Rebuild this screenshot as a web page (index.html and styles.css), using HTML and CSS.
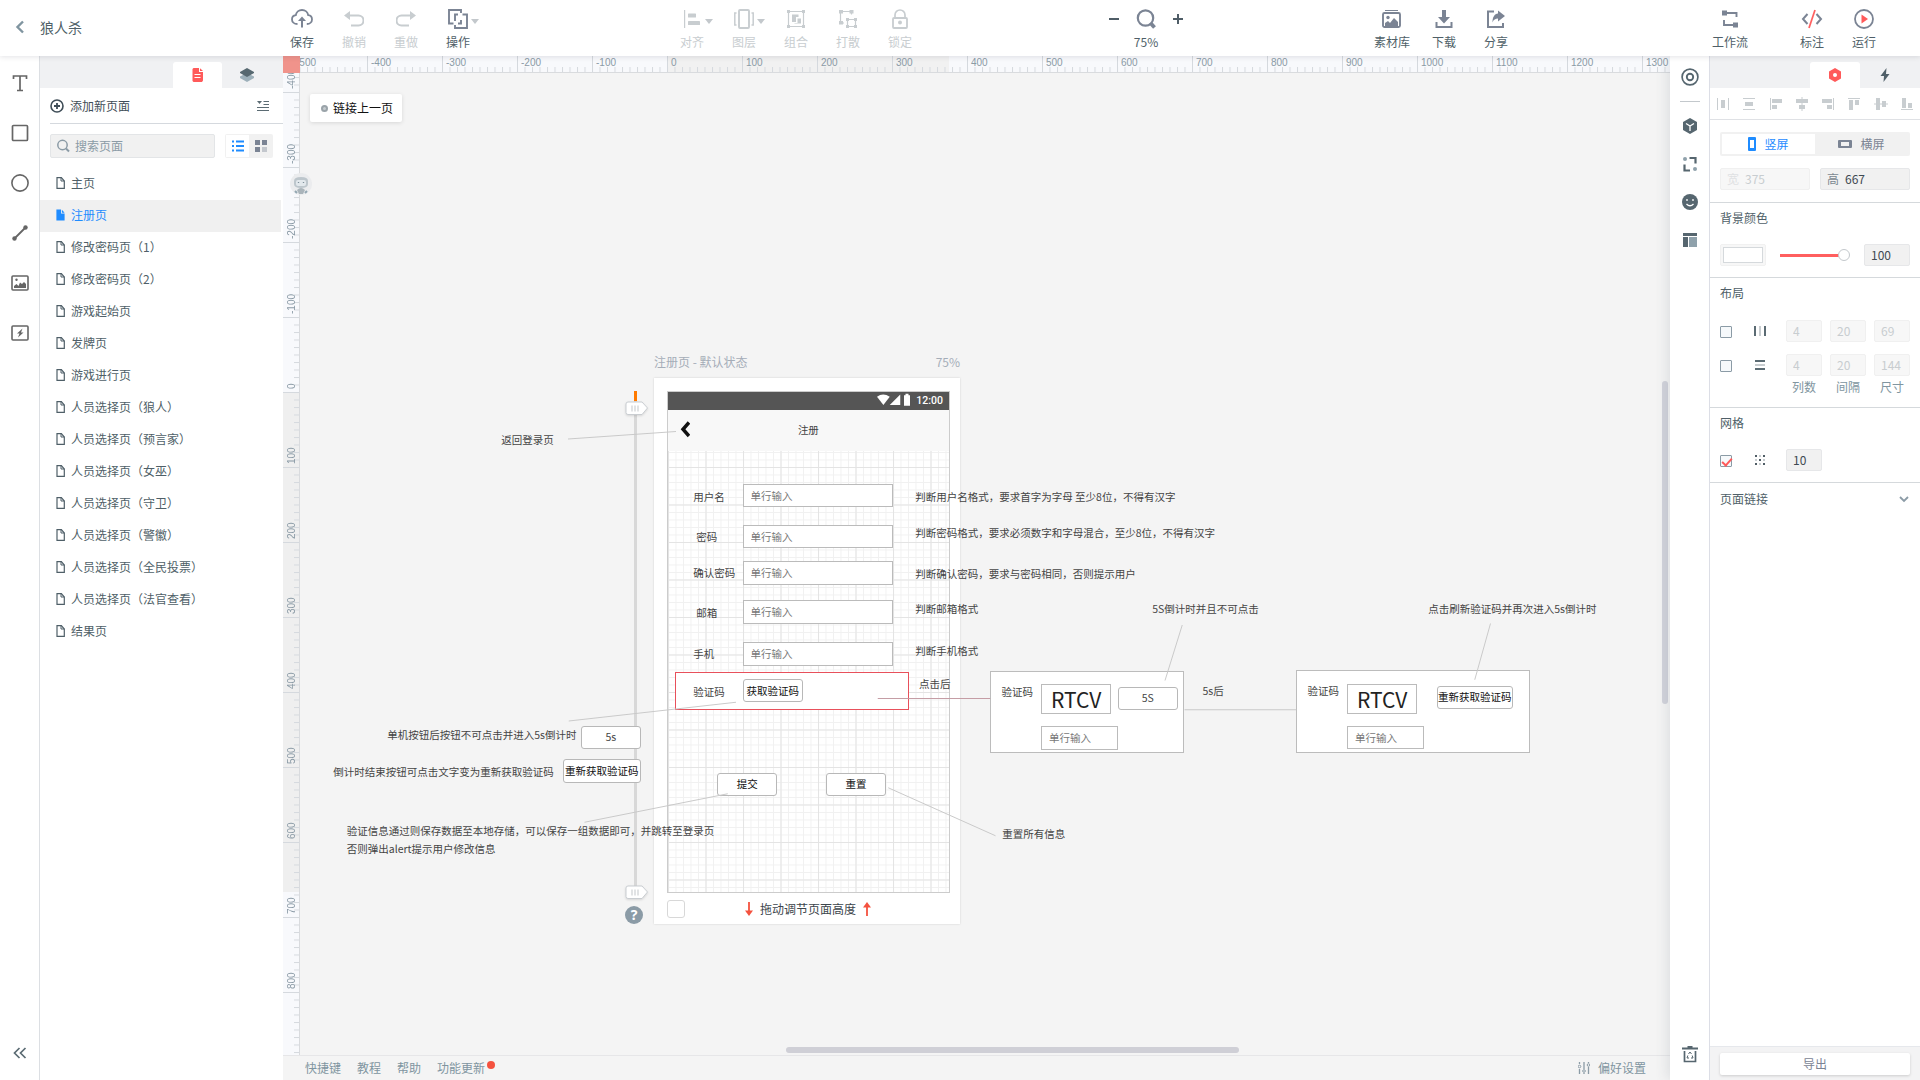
FILE: index.html
```html
<!DOCTYPE html>
<html lang="zh-CN">
<head>
<meta charset="utf-8">
<title>狼人杀</title>
<link rel="stylesheet" href="styles.css">
</head>
<body>
<svg class="sprite" aria-hidden="true">
  <symbol id="doc" viewBox="0 0 9 12"><path d="M1 .7h4.4L8.3 4v7.3H1z" fill="none" stroke="currentColor" stroke-width="1.2"/><path d="M5 .7V4h3.3" fill="none" stroke="currentColor"/></symbol>
  <symbol id="doc-full" viewBox="0 0 9 12"><path d="M.4.5H5V4.6h3.6v7H.4z" fill="currentColor"/><path d="M5.9.8v2.9h2.7z" fill="currentColor"/></symbol>
  <symbol id="caret" viewBox="0 0 8 5"><path d="M0 0h8L4 5z" fill="currentColor"/></symbol>
</svg>

<div class="app">
  <header class="topbar">
    <div class="project">
      <a class="back" href="#" aria-label="返回"><svg width="10" height="14" viewBox="0 0 10 14"><path d="M8 1.5 2.5 7 8 12.5" fill="none" stroke="#8095a0" stroke-width="2.4"/></svg></a>
      <span class="project-name">狼人杀</span>
    </div>
    <div class="tools">
      <div class="group">
        <button class="tool"><svg width="22" height="20" viewBox="0 0 22 20"><path d="M6.5 15C3 15 1 13 1 10.400 1 8 2.800 6.500 4.800 6.200 5.200 3.200 7.800 1 11 1s5.800 2.200 6.200 5.200C19.400 6.500 21 8 21 10.400c0 2.600-2 4.600-5.200 4.600" fill="none" stroke="currentColor" stroke-width="1.8"/><path d="M11 18.500V10" stroke="currentColor" stroke-width="2"/><path d="M11 7.500l4 4.500H7z" fill="currentColor"/></svg><span>保存</span></button>
        <button class="tool" disabled><svg width="20" height="20" viewBox="0 0 20 20"><path d="M0 6.500 6 2v9z" fill="currentColor"/><path d="M5 6.500h9.500a4.500 4.500 0 0 1 0 10H7" fill="none" stroke="currentColor" stroke-width="2"/></svg><span>撤销</span></button>
        <button class="tool" disabled><svg width="20" height="20" viewBox="0 0 20 20"><path d="M20 6.500 14 2v9z" fill="currentColor"/><path d="M15 6.500H5.500a4.500 4.500 0 0 0 0 10H13" fill="none" stroke="currentColor" stroke-width="2"/></svg><span>重做</span></button>
        <button class="tool has-menu"><svg width="20" height="20" viewBox="0 0 20 20"><path d="M5.500 14.500H1V1h12v3M10 14.500h3V11M14.500 5.500H19V19H7v-3M10 5.500H7V12" fill="none" stroke="currentColor" stroke-width="1.900"/></svg><svg class="caret" width="8" height="5"><use href="#caret"/></svg><span>操作</span></button>
      </div>
      <div class="group">
        <button class="tool has-menu" disabled><svg width="16" height="20" viewBox="0 0 16 20"><path d="M.6 1v18" stroke="currentColor" stroke-width="1.200"/><rect x="4" y="4.500" width="8" height="4" rx=".6" fill="currentColor"/><rect x="4" y="12" width="12" height="4" rx=".6" fill="currentColor"/></svg><svg class="caret" width="8" height="5"><use href="#caret"/></svg><span>对齐</span></button>
        <button class="tool has-menu" disabled><svg width="20" height="20" viewBox="0 0 20 20"><rect x="5" y="1" width="10" height="18" rx="1" fill="none" stroke="currentColor" stroke-width="1.900"/><path d="M2.500 4H.8v12h1.700M17.500 4h1.700v12h-1.700" fill="none" stroke="currentColor" stroke-width="1.500"/></svg><svg class="caret" width="8" height="5"><use href="#caret"/></svg><span>图层</span></button>
        <button class="tool" disabled><svg width="18" height="20" viewBox="0 0 18 20"><path d="M1.500 2.500h15v15h-15z" fill="none" stroke="currentColor" stroke-width="1.200"/><path d="M0 1h3v3H0zM15 1h3v3h-3zM0 16h3v3H0zM15 16h3v3h-3z" fill="currentColor"/><path d="M5 5.500h6.500V8H9v5H5zM10.500 9.500H14v5H7.500V14h3z" fill="currentColor"/></svg><span>组合</span></button>
        <button class="tool" disabled><svg width="20" height="20" viewBox="0 0 20 20"><path d="M2.500 2.500h11v3M2.500 2.500V14H6" fill="none" stroke="currentColor" stroke-width="1.200"/><path d="M9.500 10.500h8v7h-8z" fill="none" stroke="currentColor" stroke-width="1.200"/><path d="M1 1h4v3.500H1zM11.500 1h4v3.500h-4zM1 12h4v3.500H1zM8 9h3v3H8zM16 9h3v3h-3zM8 16h3v3H8zM16 16h3v3h-3z" fill="currentColor"/></svg><span>打散</span></button>
        <button class="tool" disabled><svg width="18" height="20" viewBox="0 0 18 20"><rect x="2" y="9" width="14" height="10" rx="1" fill="none" stroke="currentColor" stroke-width="1.800"/><path d="M4 8V6a5 5 0 0 1 10 0v2" fill="none" stroke="currentColor" stroke-width="1.700"/><circle cx="9" cy="13.500" r="2" fill="currentColor"/></svg><span>锁定</span></button>
      </div>
      <div class="zoom-group">
        <div class="zoom-row">
          <button class="icon-btn" aria-label="缩小"><svg width="10" height="10"><path d="M0 5h10" stroke="#4f5d67" stroke-width="2"/></svg></button>
          <button class="icon-btn" aria-label="缩放"><svg width="22" height="20" viewBox="0 0 22 20"><circle cx="10.500" cy="9" r="7.700" fill="none" stroke="#7b8494" stroke-width="2.200"/><path d="m15.500 14 4 4.500" stroke="#7b8494" stroke-width="3.800"/></svg></button>
          <button class="icon-btn" aria-label="放大"><svg width="10" height="10"><path d="M0 5h10M5 0v10" stroke="#4f5d67" stroke-width="2"/></svg></button>
        </div>
        <span>75%</span>
      </div>
      <div class="group">
        <button class="tool"><svg width="20" height="20" viewBox="0 0 20 20"><path d="M3 1.500h13" stroke="currentColor"/><rect x="1" y="4" width="17" height="14" rx="1.500" fill="none" stroke="currentColor" stroke-width="1.900"/><circle cx="6" cy="8.500" r="1.700" fill="currentColor"/><path d="M3 17v-3l3-2 2 2 4-5 4 4v4z" fill="currentColor"/></svg><span>素材库</span></button>
        <button class="tool"><svg width="18" height="20" viewBox="0 0 18 20"><path d="M1.500 13v5h15v-5" fill="none" stroke="currentColor" stroke-width="2"/><path d="M7 1h4v7h4l-6 6.500L3 8h4z" fill="currentColor"/></svg><span>下载</span></button>
        <button class="tool"><svg width="20" height="20" viewBox="0 0 20 20"><path d="M8 2.500H2V18h15v-4" fill="none" stroke="currentColor" stroke-width="2"/><path d="M12 1.500 19 7l-7 5.500V9.500c-2.500 0-4.500 1-5.500 4C6.500 8 8.500 5 12 4.500z" fill="currentColor"/></svg><span>分享</span></button>
      </div>
      <div class="group">
        <button class="tool flow"><svg width="18" height="20" viewBox="0 0 18 20"><path d="M4 4h11.500v4M14 16H3v-5" fill="none" stroke="currentColor" stroke-width="1.900"/><path d="M1 1.500h5v5H1zM12 13.500h5v5h-5z" fill="currentColor"/></svg><span>工作流</span></button>
        <button class="tool"><svg width="22" height="20" viewBox="0 0 22 20"><path d="M6.500 5 2 10l4.500 5M15.500 5l4.500 5-4.500 5" fill="none" stroke="#7b8494" stroke-width="2"/><path d="M14 1 8 19" stroke="#ff5f5f" stroke-width="1.700"/></svg><span>标注</span></button>
        <button class="tool"><svg width="22" height="20" viewBox="0 0 22 20"><circle cx="11" cy="10" r="9" fill="none" stroke="#7b8494" stroke-width="1.800"/><path d="M8.500 5.500V14.500L15 10z" fill="#ff5a5a"/></svg><span>运行</span></button>
      </div>
    </div>
  </header>

  <nav class="shapes" aria-label="绘图工具">
    <button class="icon-btn" aria-label="文本"><svg width="18" height="20" viewBox="0 0 18 20"><path d="M2.500 6V3h13v3M9 3v14.500M6 17.500h6" fill="none" stroke="currentColor" stroke-width="1.700"/></svg></button>
    <button class="icon-btn" aria-label="矩形"><svg width="18" height="20" viewBox="0 0 18 20"><rect x="1.500" y="2.500" width="15" height="15" rx="1" fill="none" stroke="currentColor" stroke-width="1.700"/></svg></button>
    <button class="icon-btn" aria-label="圆形"><svg width="18" height="20" viewBox="0 0 18 20"><circle cx="9" cy="10" r="8.100" fill="none" stroke="currentColor" stroke-width="1.600"/></svg></button>
    <button class="icon-btn" aria-label="直线"><svg width="18" height="20" viewBox="0 0 18 20"><path d="M3.500 15.500 14.500 4.500" stroke="currentColor" stroke-width="1.800"/><circle cx="3.500" cy="15.500" r="2.200" fill="currentColor"/><circle cx="14.500" cy="4.500" r="2.200" fill="currentColor"/></svg></button>
    <button class="icon-btn" aria-label="图片"><svg width="18" height="20" viewBox="0 0 18 20"><rect x="1" y="3" width="16" height="14" rx="1" fill="none" stroke="currentColor" stroke-width="1.600"/><circle cx="5.500" cy="6.800" r="1.200" fill="currentColor"/><path d="M3 15v-2l2.500-2 2 2L9 9.500l2 1.500 2-2 2 2v4z" fill="currentColor"/></svg></button>
    <button class="icon-btn" aria-label="快捷组件"><svg width="18" height="20" viewBox="0 0 18 20"><rect x="1" y="3" width="16" height="14" rx="1" fill="none" stroke="currentColor" stroke-width="1.600"/><path d="M11.500 5.500 6 10.500h2.500L7 14.500l5.500-5H10z" fill="currentColor"/></svg></button>
    <button class="icon-btn collapse" aria-label="收起"><svg width="14" height="12" viewBox="0 0 14 12"><path d="M6.500 1 1.500 6l5 5M12.500 1l-5 5 5 5" fill="none" stroke="currentColor" stroke-width="1.700"/></svg></button>
  </nav>

  <aside class="pages">
    <div class="tabs">
      <button class="tab active" aria-label="页面"><svg width="12" height="14" viewBox="0 0 12 14"><path d="M1.500 0H7v4h4v8.500L10 14H1.500L.5 13V1z" fill="#ff5a5a"/><path d="M8 .3V3h3z" fill="#ff5a5a"/><path d="M2.500 6.500h6M2.500 9.500h6" stroke="#fff" stroke-width="1.200"/></svg></button>
      <button class="tab" aria-label="图层"><svg width="16" height="14" viewBox="0 0 16 14"><path d="M1 8.500 8 5l7 3.500v1.500L8 14 1 10z" fill="#9db0ba"/><path d="M1 4 8 0l7 4v1L8 9 1 5z" fill="#566870"/></svg></button>
    </div>
    <div class="add-row">
      <button class="add"><svg width="14" height="14" viewBox="0 0 14 14"><circle cx="7" cy="7" r="6" fill="none" stroke="currentColor" stroke-width="1.600"/><path d="M4 7h6M7 4v6" stroke="currentColor" stroke-width="1.800"/></svg>添加新页面</button>
      <button class="icon-btn" aria-label="折叠"><svg width="12" height="12" viewBox="0 0 12 12"><path d="M0 1h5L2.500 4z" fill="#5b6b73"/><path d="M6.500 1.500H12M6.500 4.500H12M0 7.500h12M0 10.500h12" stroke="#5b6b73" stroke-width="1.200"/></svg></button>
    </div>
    <div class="search-row">
      <label class="search"><svg width="14" height="14" viewBox="0 0 14 14"><circle cx="6.500" cy="6" r="4.700" fill="none" stroke="#8b9ba6" stroke-width="1.500"/><path d="m10 9.500 3 3" stroke="#8b9ba6" stroke-width="2"/></svg><input type="text" placeholder="搜索页面" aria-label="搜索页面"></label>
      <div class="view-toggle">
        <button class="on" aria-label="列表"><svg width="12" height="12" viewBox="0 0 12 12"><path d="M0 1.500h2M0 6h2M0 10.500h2M4 1.500h8M4 6h8M4 10.500h8" stroke="#1f8cff" stroke-width="1.800"/></svg></button>
        <button aria-label="网格"><svg width="12" height="12" viewBox="0 0 12 12"><path d="M0 0h5v5H0zM7 0h5v5H7zM0 7h5v5H0z" fill="#7b8494"/><path d="M7 7h5v5H7z" fill="#c3c7cd"/></svg></button>
      </div>
    </div>
    <ul class="page-list">
      <li><a href="#"><svg width="9" height="12"><use href="#doc"/></svg>主页</a></li>
      <li><a href="#" class="current"><svg width="9" height="12"><use href="#doc-full"/></svg>注册页</a></li>
      <li><a href="#"><svg width="9" height="12"><use href="#doc"/></svg>修改密码页（1）</a></li>
      <li><a href="#"><svg width="9" height="12"><use href="#doc"/></svg>修改密码页（2）</a></li>
      <li><a href="#"><svg width="9" height="12"><use href="#doc"/></svg>游戏起始页</a></li>
      <li><a href="#"><svg width="9" height="12"><use href="#doc"/></svg>发牌页</a></li>
      <li><a href="#"><svg width="9" height="12"><use href="#doc"/></svg>游戏进行页</a></li>
      <li><a href="#"><svg width="9" height="12"><use href="#doc"/></svg>人员选择页（狼人）</a></li>
      <li><a href="#"><svg width="9" height="12"><use href="#doc"/></svg>人员选择页（预言家）</a></li>
      <li><a href="#"><svg width="9" height="12"><use href="#doc"/></svg>人员选择页（女巫）</a></li>
      <li><a href="#"><svg width="9" height="12"><use href="#doc"/></svg>人员选择页（守卫）</a></li>
      <li><a href="#"><svg width="9" height="12"><use href="#doc"/></svg>人员选择页（警徽）</a></li>
      <li><a href="#"><svg width="9" height="12"><use href="#doc"/></svg>人员选择页（全民投票）</a></li>
      <li><a href="#"><svg width="9" height="12"><use href="#doc"/></svg>人员选择页（法官查看）</a></li>
      <li><a href="#"><svg width="9" height="12"><use href="#doc"/></svg>结果页</a></li>
    </ul>
  </aside>

  <main class="workspace">
    <div class="ruler-corner"></div>
    <div class="ruler ruler-x">
      <svg class="ticks" width="100%" height="16"><defs><pattern id="tx" x="367" width="7.500" height="16" patternUnits="userSpaceOnUse"><path d="M.5 11v5" stroke="#d5d9de"/></pattern></defs><rect x="367" width="282" height="16" fill="#f1f1f1"/><rect width="100%" height="16" fill="url(#tx)"/></svg>
      <div class="marks"><span>-500</span><span>-400</span><span>-300</span><span>-200</span><span>-100</span><span>0</span><span>100</span><span>200</span><span>300</span><span>400</span><span>500</span><span>600</span><span>700</span><span>800</span><span>900</span><span>1000</span><span>1100</span><span>1200</span><span>1300</span></div>
    </div>
    <div class="ruler ruler-y">
      <svg class="ticks" width="16" height="100%"><defs><pattern id="ty" y="319" width="16" height="7.500" patternUnits="userSpaceOnUse"><path d="M11 .5h5" stroke="#d5d9de"/></pattern></defs><rect y="319" width="16" height="500" fill="#efefef"/><rect width="16" height="100%" fill="url(#ty)"/></svg>
      <div class="marks"><span>-400</span><span>-300</span><span>-200</span><span>-100</span><span>0</span><span>100</span><span>200</span><span>300</span><span>400</span><span>500</span><span>600</span><span>700</span><span>800</span></div>
    </div>

    <div class="canvas">
      <button class="link-prev"><i></i>链接上一页</button>

      <div class="board-head"><span>注册页 - 默认状态</span><span>75%</span></div>
      <div class="board">
        <div class="board-foot">
          <input type="checkbox" class="foot-check" aria-label="固定高度">
          <div class="resize">
            <svg width="8" height="14" viewBox="0 0 8 14"><path d="M4 0v10" stroke="#f4523f" stroke-width="1.800"/><path d="M0 8.500h8L4 14z" fill="#f4523f"/></svg>
            <span>拖动调节页面高度</span>
            <svg width="8" height="14" viewBox="0 0 8 14"><path d="M4 14V4" stroke="#f4523f" stroke-width="1.800"/><path d="M0 5.500h8L4 0z" fill="#f4523f"/></svg>
          </div>
        </div>
      </div>
      <div class="track"></div>
      <svg class="handle handle-top" width="24" height="16" viewBox="0 0 24 16"><path d="M3 1h14l5.500 6L17 13.500H3q-2 0-2-2V3q0-2 2-2z" fill="#fff" stroke="#c9cdd1"/><path d="M7 4.500v6M10 4.500v6M13 4.500v6" stroke="#c3c7ca"/></svg>
      <svg class="handle handle-bottom" width="24" height="16" viewBox="0 0 24 16"><path d="M3 1h14l5.500 6L17 13.500H3q-2 0-2-2V3q0-2 2-2z" fill="#fff" stroke="#c9cdd1"/><path d="M7 4.500v6M10 4.500v6M13 4.500v6" stroke="#c3c7ca"/></svg>
      <button class="help" aria-label="帮助">?</button>

      <div class="origin"><div class="stage">
        <div class="screen">
          <svg class="grid" width="375" height="667"><defs>
            <pattern id="g1" width="10" height="10" patternUnits="userSpaceOnUse"><path d="M.6 0v10M0 .6h10" stroke="#f1f1f1" stroke-width="1.300"/></pattern>
            <pattern id="g2" width="50" height="50" patternUnits="userSpaceOnUse"><path d="M.6 0v50M0 .6h50" stroke="#e4e4e4" stroke-width="1.600"/></pattern></defs>
            <rect width="375" height="667" fill="url(#g1)"/><rect width="375" height="667" fill="url(#g2)"/></svg>
          <div class="status">
            <svg width="48" height="20" viewBox="0 0 48 20"><path d="M0 5q8-6 17 0l-8.500 11z" fill="#fff"/><path d="M31 2v14H17z" fill="#fff"/><path d="M36 3h2V1h4v2h2v14h-8z" fill="#fff"/></svg>
            <span>12:00</span>
          </div>
          <div class="navbar"><svg width="14" height="22" viewBox="0 0 14 22"><path d="M12 2 4 11l8 9" fill="none" stroke="#111" stroke-width="4.600"/></svg><span>注册</span></div>
        </div>

        <div class="panel hot" style="left:11px;top:375px;width:311px;height:50px"></div>
        <div class="panel" style="left:431px;top:373px;width:258px;height:110px"></div>
        <div class="panel" style="left:839px;top:372px;width:312px;height:110px"></div>

        <label class="note" for="f1" style="left:35px;top:129px">用户名</label>
        <input class="field" id="f1" placeholder="单行输入" style="left:101px;top:124px">
        <label class="note" for="f2" style="left:39px;top:182px">密码</label>
        <input class="field" id="f2" placeholder="单行输入" style="left:101px;top:178px">
        <label class="note" for="f3" style="left:35px;top:231px">确认密码</label>
        <input class="field" id="f3" placeholder="单行输入" style="left:101px;top:227px">
        <label class="note" for="f4" style="left:39px;top:284px">邮箱</label>
        <input class="field" id="f4" placeholder="单行输入" style="left:101px;top:279px">
        <label class="note" for="f5" style="left:35px;top:339px">手机</label>
        <input class="field" id="f5" placeholder="单行输入" style="left:101px;top:335px">
        <span class="note" style="left:35px;top:389px">验证码</span>
        <button class="btn" style="left:101px;top:384px;width:80px">获取验证码</button>
        <button class="btn" style="left:67px;top:509px;width:80px">提交</button>
        <button class="btn" style="left:212px;top:509px;width:80px">重置</button>

        <span class="note" style="left:331px;top:129px">判断用户名格式，要求首字为字母 至少8位，不得有汉字</span>
        <span class="note" style="left:331px;top:177px">判断密码格式，要求必须数字和字母混合，至少8位，不得有汉字</span>
        <span class="note" style="left:331px;top:232px">判断确认密码，要求与密码相同，否则提示用户</span>
        <span class="note" style="left:331px;top:279px">判断邮箱格式</span>
        <span class="note" style="left:331px;top:335px">判断手机格式</span>
        <span class="note" style="left:336px;top:379px">点击后</span>

        <span class="note" style="left:-221px;top:53px">返回登录页</span>
        <span class="note" style="left:-373px;top:447px">单机按钮后按钮不可点击并进入5s倒计时</span>
        <button class="btn soft" style="left:-115px;top:446px;width:80px">5s</button>
        <span class="note" style="left:-445px;top:496px">倒计时结束按钮可点击文字变为重新获取验证码</span>
        <button class="btn" style="left:-139px;top:491px;width:104px">重新获取验证码</button>
        <p class="note" style="left:-427px;top:575px">验证信息通过则保存数据至本地存储，可以保存一组数据即可，并跳转至登录页<br>否则弹出alert提示用户修改信息</p>
        <span class="note" style="left:447px;top:579px">重置所有信息</span>

        <span class="note" style="left:647px;top:279px">5S倒计时并且不可点击</span>
        <label class="note" for="c1" style="left:446px;top:389px">验证码</label>
        <div class="captcha" style="left:499px;top:391px">RTCV</div>
        <button class="btn soft" style="left:601px;top:394px;width:80px">5S</button>
        <input class="field short" id="c1" placeholder="单行输入" style="left:499px;top:447px">
        <span class="note" style="left:714px;top:388px">5s后</span>

        <span class="note" style="left:1015px;top:279px">点击刷新验证码并再次进入5s倒计时</span>
        <label class="note" for="c2" style="left:854px;top:388px">验证码</label>
        <div class="captcha" style="left:907px;top:390px">RTCV</div>
        <button class="btn" style="left:1026px;top:393px;width:102px">重新获取验证码</button>
        <input class="field short" id="c2" placeholder="单行输入" style="left:907px;top:446px">

        <svg class="wires" width="375" height="667" fill="none" stroke="#c8c8c8" stroke-width="1.300">
          <path d="M-132 64 12 54M-131 440 92 415M-110 575 81 537M295 529l143 64M687 312l-23 74M1098 310l-21 75M690 425h149"/>
          <path d="M281 410h150" stroke="#c39aa2"/>
        </svg>
      </div></div>

      <div class="scroll-x"></div>
      <div class="scroll-y"></div>
    </div>
    <svg class="avatar" width="24" height="24" viewBox="0 0 24 24"><circle cx="12" cy="12" r="11" fill="#ebecee"/><path d="M5 9q0-4 7-4t7 4v3q0 4-7 4t-7-4z" fill="#bdc6cc"/><rect x="7" y="8" width="10" height="6" rx="2" fill="#e2e8ec"/><path d="M9.500 10v1M14.500 10v1" stroke="#7f909a" stroke-width="1.300"/><path d="M8 18q4-4 8 0l-2 4h-4z" fill="#aab4ba"/><path d="M6 19l2 2M18 19l-2 2" stroke="#93a7b2" stroke-width="2"/></svg>
    <footer class="statusbar">
      <a href="#">快捷键</a><a href="#">教程</a><a href="#">帮助</a><a href="#" class="news">功能更新</a>
      <button class="prefs"><svg width="12" height="12" viewBox="0 0 12 12"><path d="M1.500 0v2M1.500 7v5M6 0v7M6 11v1M10.500 0v1M10.500 5v7" stroke="#8b9ba6" stroke-width="1.300"/><circle cx="1.500" cy="4.500" r="1.300" fill="none" stroke="#8b9ba6"/><circle cx="6" cy="9" r="1.300" fill="none" stroke="#8b9ba6"/><circle cx="10.500" cy="3" r="1.300" fill="none" stroke="#8b9ba6"/></svg>偏好设置</button>
    </footer>
  </main>

  <nav class="library" aria-label="组件库">
    <button class="icon-btn" aria-label="基础"><svg width="18" height="18" viewBox="0 0 18 18"><circle cx="9" cy="9" r="7.900" fill="none" stroke="currentColor" stroke-width="1.700"/><circle cx="9" cy="9" r="3.200" fill="none" stroke="currentColor" stroke-width="1.900"/></svg></button>
    <hr>
    <button class="icon-btn" aria-label="组件"><svg width="18" height="18" viewBox="0 0 18 18"><path d="m9 1 7 4v8l-7 4-7-4V5z" fill="currentColor"/><path d="M5 6.500 9 9l4-2.500M9 9v5" fill="none" stroke="#fff" stroke-width="1.300"/></svg></button>
    <button class="icon-btn" aria-label="替换"><svg width="18" height="18" viewBox="0 0 18 18"><path d="M8.500 3h6v5.500M9 15.500H3.500V9.500" fill="none" stroke="currentColor" stroke-width="2.200"/><circle cx="4" cy="4" r="2" fill="#8fa1ab"/><circle cx="14" cy="14" r="2" fill="#8fa1ab"/></svg></button>
    <button class="icon-btn" aria-label="图标"><svg width="18" height="18" viewBox="0 0 18 18"><circle cx="9" cy="9" r="8" fill="currentColor"/><path d="M6 6v2M12 6v2M5.500 11q3.500 3.500 7 0" fill="none" stroke="#fff" stroke-width="1.300"/></svg></button>
    <button class="icon-btn" aria-label="页面模板"><svg width="18" height="18" viewBox="0 0 18 18"><path d="M2 2h14v3H2zM2 6h5v10H2z" fill="currentColor"/><path d="M8 6h8v10H8z" fill="#8fa1ab"/></svg></button>
    <button class="icon-btn trash" aria-label="回收站"><svg width="18" height="18" viewBox="0 0 18 18"><path d="M1 3.500h16M6.500 2h5" stroke="currentColor" stroke-width="1.900"/><path d="M3.500 6v10.500h11V6" fill="none" stroke="currentColor" stroke-width="1.700"/><path d="M7.500 9 9 7l1.500 2M6.800 10.500 6 13h2M11.200 10.500l.8 2.500h-2" fill="none" stroke="currentColor"/></svg></button>
  </nav>

  <aside class="props">
    <div class="tabs">
      <button class="tab active" aria-label="属性"><svg width="14" height="14" viewBox="0 0 14 14"><path d="m7 0 6 3.500v7L7 14l-6-3.500v-7z" fill="#ff5a5a"/><circle cx="7" cy="7" r="2" fill="#fff"/></svg></button>
      <button class="tab" aria-label="事件"><svg width="10" height="14" viewBox="0 0 10 14"><path d="M6.500 0 .5 8H4l-.5 6L9.500 6H6z" fill="#4f5f68"/></svg></button>
    </div>
    <div class="align-row">
      <button class="icon-btn" aria-label="水平分布"><svg width="14" height="14"><path d="M1.500 1v12M12.500 1v12" stroke="#c8cdd0"/><path d="M5 3h4v8H5z" fill="#c8cdd0"/></svg></button>
      <button class="icon-btn" aria-label="垂直分布"><svg width="14" height="14"><path d="M1 1.500h12M1 12.500h12" stroke="#c8cdd0"/><path d="M3 5h8v4H3z" fill="#c8cdd0"/></svg></button>
      <button class="icon-btn" aria-label="左对齐"><svg width="14" height="14"><path d="M1.500 1v12" stroke="#c8cdd0"/><path d="M3 2h10v4H3zM3 8h5v4H3z" fill="#c8cdd0"/></svg></button>
      <button class="icon-btn" aria-label="水平居中"><svg width="14" height="14"><path d="M7 0v14" stroke="#c8cdd0"/><path d="M1 2h12v4H1zM4 8h6v4H4z" fill="#c8cdd0"/></svg></button>
      <button class="icon-btn" aria-label="右对齐"><svg width="14" height="14"><path d="M12.500 1v12" stroke="#c8cdd0"/><path d="M1 2h10v4H1zM6 8h5v4H6z" fill="#c8cdd0"/></svg></button>
      <button class="icon-btn" aria-label="顶对齐"><svg width="14" height="14"><path d="M1 1.500h12" stroke="#c8cdd0"/><path d="M2 3h4v10H2zM8 3h4v5H8z" fill="#c8cdd0"/></svg></button>
      <button class="icon-btn" aria-label="垂直居中"><svg width="14" height="14"><path d="M0 7h14" stroke="#c8cdd0"/><path d="M2 1h4v12H2zM8 4h4v6H8z" fill="#c8cdd0"/></svg></button>
      <button class="icon-btn" aria-label="底对齐"><svg width="14" height="14"><path d="M1 12.500h12" stroke="#c8cdd0"/><path d="M2 1h4v10H2zM8 6h4v5H8z" fill="#c8cdd0"/></svg></button>
    </div>
    <section class="size">
      <div class="orient">
        <button class="on"><svg width="8" height="14"><path d="M0 1q0-1 1-1h6q1 0 1 1v12q0 1-1 1H1q-1 0-1-1zM2 3v8h4V3z" fill="#1f8cff" fill-rule="evenodd"/></svg>竖屏</button>
        <button><svg width="14" height="8"><path d="M0 1q0-1 1-1h12q1 0 1 1v6q0 1-1 1H1q-1 0-1-1zM3 2v4h8V2z" fill="#7b8494" fill-rule="evenodd"/></svg>横屏</button>
      </div>
      <div class="dims">
        <label class="num off">宽<input value="375" disabled></label>
        <label class="num">高<input value="667"></label>
      </div>
    </section>
    <section class="bg">
      <h2>背景颜色</h2>
      <div class="bg-row">
        <button class="swatch" aria-label="背景颜色"><i></i></button>
        <input type="range" min="0" max="100" value="100" aria-label="不透明度">
        <input class="num-box wide" value="100" aria-label="不透明度数值">
      </div>
    </section>
    <section class="layout">
      <h2>布局</h2>
      <div class="layout-grid">
        <input type="checkbox" aria-label="列布局"><svg width="12" height="12"><path d="M1 1v10M11 1v10" stroke="#5b6b73" stroke-width="2"/><path d="M6 1v10" stroke="#c8cdd0" stroke-width="2"/></svg>
        <input class="num-box" value="4" disabled aria-label="列数"><input class="num-box" value="20" disabled aria-label="列间隔"><input class="num-box" value="69" disabled aria-label="列尺寸">
        <input type="checkbox" aria-label="行布局"><svg width="12" height="12"><path d="M1 2h10M1 10h10" stroke="#5b6b73" stroke-width="2"/><path d="M1 6h10" stroke="#c8cdd0" stroke-width="2"/></svg>
        <input class="num-box" value="4" disabled aria-label="行数"><input class="num-box" value="20" disabled aria-label="行间隔"><input class="num-box" value="144" disabled aria-label="行尺寸">
      </div>
      <div class="captions"><span>列数</span><span>间隔</span><span>尺寸</span></div>
    </section>
    <section class="mesh">
      <h2>网格</h2>
      <div class="layout-grid">
        <input type="checkbox" checked aria-label="显示网格"><svg width="12" height="12"><path d="M1 1h2v2H1zM9 1h2v2H9zM5 5h2v2H5zM1 9h2v2H1zM9 9h2v2H9z" fill="#4f5d66"/><path d="M5 1h2v2H5zM1 5h2v2H1zM9 5h2v2H9zM5 9h2v2H5z" fill="#c8cdd0"/></svg>
        <input class="num-box" value="10" aria-label="网格大小">
      </div>
    </section>
    <button class="links"><span>页面链接</span><svg width="10" height="8" viewBox="0 0 10 8"><path d="m1 2 4 4 4-4" fill="none" stroke="#8b9ba6" stroke-width="1.800"/></svg></button>
    <div class="export"><button>导出</button></div>
  </aside>
</div>
</body>
</html>
```
FILE: styles.css
```css
* { box-sizing: border-box; }
body {
  margin: 0;
  font: 12px/18px "Noto Sans CJK SC", sans-serif;
  color: #4f5f68;
  background: #fff;
}
button, input { font: inherit; color: inherit; margin: 0; }
button { border: 0; padding: 0; background: none; cursor: pointer; }
a { color: inherit; text-decoration: none; }
svg { display: block; flex: none; }
.sprite { position: absolute; width: 0; height: 0; }
.icon-btn { display: grid; place-items: center; }

.app {
  display: grid;
  grid-template: 56px minmax(0, 1fr) / 40px 243px minmax(0, 1fr) 39px 211px;
  height: 100vh;
  overflow: hidden;
}

/* top bar */
.topbar {
  grid-column: 1 / -1;
  display: flex;
  background: #fff;
  box-shadow: 0 1px 5px rgba(60, 60, 80, .14);
  z-index: 5;
}
.project { display: flex; align-items: center; gap: 15px; width: 276px; padding: 0 0 2px 15px; }
.project-name { font-size: 14px; }
.tools { flex: 1; display: flex; justify-content: space-between; padding-right: 30px; }
.group { display: flex; }
.tool {
  position: relative;
  width: 52px;
  padding-top: 9px;
  display: flex;
  flex-direction: column;
  align-items: center;
  gap: 4px;
  color: #7b8494;
}
.tool span { color: #4f5f68; white-space: nowrap; }
.tool:disabled, .tool:disabled span { color: #c8cdd0; }
.tool .caret { position: absolute; right: 5px; top: 19px; color: #c3c8cc; }
.flow { margin-right: 30px; }
.zoom-group { width: 76px; padding-top: 9px; display: flex; flex-direction: column; align-items: center; gap: 4px; }
.zoom-row { display: flex; justify-content: space-between; width: 100%; padding: 0 1px; }

/* drawing tools */
.shapes {
  border-right: 1px solid #dcdfe3;
  padding: 17px 0 21px;
  display: flex;
  flex-direction: column;
  align-items: center;
  gap: 30px;
  color: #666;
}
.collapse { margin-top: auto; color: #5b6b73; }

/* tabs shared by both side panels */
.tabs { display: flex; justify-content: flex-end; height: 32px; padding-top: 6px; background: #f0f1f3; }
.tab { width: 50px; display: grid; place-items: center; border-radius: 3px 3px 0 0; }
.tab.active { background: #fff; }
.pages .tabs { padding-right: 12px; }
.pages .tab { width: 49px; }
.props .tabs { padding-right: 10px; }

/* page panel */
.add-row {
  margin-left: 10px;
  padding: 0 14px 0 0;
  height: 36px;
  display: flex;
  align-items: center;
  justify-content: space-between;
  border-bottom: 1px solid #d5d9de;
}
.add { display: flex; align-items: center; gap: 6px; color: #3f4d57; }
.search-row { display: flex; justify-content: space-between; padding: 10px; }
.search {
  width: 165px;
  height: 24px;
  display: flex;
  align-items: center;
  gap: 5px;
  padding: 0 5px;
  background: #f1f1f1;
  border: 1px solid #e3e5e7;
  border-radius: 2px;
}
.search input { width: 100%; min-width: 0; padding: 0; border: 0; background: none; outline: 0; }
.search input::placeholder { color: #8b9ba6; }
.view-toggle { display: flex; width: 48px; height: 24px; padding: 1px; background: #f1f1f1; border-radius: 2px; }
.view-toggle button { flex: 1; display: grid; place-items: center; }
.view-toggle .on { background: #fff; }
.page-list { list-style: none; margin: 0; padding: 0 2px 0 0; }
.page-list a { display: flex; align-items: center; gap: 6px; height: 32px; padding: 0 0 2px 16px; }
.page-list .current { background: #f0f0f0; color: #1f8cff; }

/* workspace */
.workspace {
  position: relative;
  display: grid;
  grid-template: 17px minmax(0, 1fr) 25px / 17px minmax(0, 1fr);
  background: #f4f4f4;
}
.ruler-corner { background: #f0938b; }
.ruler { position: relative; overflow: hidden; background: #f8f9fc; font: 10px/14px "Liberation Sans", sans-serif; color: #8b9ba6; }
.ruler-x { border-bottom: 1px solid #d9dbde; }
.ruler-y { border-right: 1px solid #d9dbde; }
.ticks { position: absolute; inset: 0; }
.marks { position: relative; display: flex; }
.ruler-x .marks { margin-left: -8px; height: 16px; }
.ruler-x span { flex: none; width: 75px; border-left: 1px solid #d5d9de; padding-left: 3px; }
.ruler-y .marks { flex-direction: column; margin-top: -55px; }
.ruler-y span {
  flex: none;
  height: 75px;
  width: 16px;
  line-height: 12px;
  writing-mode: vertical-rl;
  transform: rotate(180deg);
  border-top: 1px solid #d5d9de;
  padding-top: 3px;
  padding-right: 3px;
}
.canvas { position: relative; overflow: hidden; }
.link-prev {
  position: absolute;
  left: 10px;
  top: 21px;
  display: flex;
  align-items: center;
  gap: 5px;
  height: 28px;
  padding: 0 9px 0 11px;
  background: #fff;
  border-radius: 2px;
  box-shadow: 0 1px 4px rgba(0, 0, 0, .12);
  color: #111;
}
.link-prev i { width: 7px; height: 7px; border: 2px solid #9aa3a9; border-radius: 50%; background: #c6ccd0; }
.avatar { position: absolute; left: 6px; top: 116px; }

.board-head { position: absolute; left: 354px; top: 280px; width: 306px; display: flex; justify-content: space-between; color: #a5adb8; }
.board {
  position: absolute;
  left: 354px;
  top: 305px;
  width: 306px;
  height: 546px;
  display: flex;
  align-items: flex-end;
  background: #fff;
  box-shadow: 0 0 2px rgba(0, 0, 0, .15);
}
.board-foot { flex: 1; display: grid; grid-template-columns: 18px 1fr 16px; align-items: center; height: 31px; padding: 0 13px; }
.foot-check { appearance: none; width: 18px; height: 18px; border: 1px solid #d8d8d8; border-radius: 3px; background: #fff; }
.resize { display: flex; justify-content: center; align-items: center; gap: 7px; color: #3c454c; }
.track { position: absolute; left: 334px; top: 318px; width: 3px; height: 504px; background: linear-gradient(#ff7a00 10px, #d8d8d8 10px); }
.handle { position: absolute; left: 325px; filter: drop-shadow(0 1px 1px rgba(0, 0, 0, .12)); }
.handle-top { top: 328px; }
.handle-bottom { top: 812px; }
.help {
  position: absolute;
  left: 325px;
  top: 833px;
  width: 18px;
  height: 18px;
  border-radius: 50%;
  background: #8b9ba6;
  color: #fff;
  font: bold 14px/18px "Noto Sans", sans-serif;
}

/* artwork, in design pixels, shown at 75% */
.origin { position: absolute; left: 367px; top: 318px; }
.stage { position: relative; width: 375px; height: 667px; zoom: .75; font-size: 14px; line-height: 24px; color: #444; }
.stage > * { position: absolute; margin: 0; }
.screen { left: 1px; top: 1px; width: 375px; height: 667px; outline: 1px solid #ccc; background: #fff; }
.grid { position: absolute; inset: 0; }
.status { position: relative; height: 24px; display: flex; justify-content: flex-end; align-items: center; gap: 4px; padding-right: 8px; background: #555; color: #fff; font: 500 14px/24px Roboto, sans-serif; }
.navbar { position: relative; height: 55px; display: grid; grid-template-columns: 14px 1fr 14px; align-items: center; padding: 0 16px 2px; background: #f8f8f8; }
.navbar span { text-align: center; }
.panel { background: #fff; border: 1px solid #bcbcbc; }
.panel.hot { border-color: #e8505b; }
.note { white-space: nowrap; }
.field { width: 200px; height: 31px; padding: 0 9px; border: 1px solid #bbb; background: #fff; outline: 0; }
.field::placeholder { color: #777; }
.field.short { width: 102px; }
.captcha { width: 93px; height: 40px; border: 1px solid #bbb; background: #fff; color: #222; font-size: 28px; line-height: 38px; text-align: center; }
.btn { height: 31px; border: 1px solid #b8b8b8; border-radius: 4px; background: #fff; color: #111; white-space: nowrap; }
.btn.soft { color: #444; }
.wires { left: 0; top: 0; overflow: visible; pointer-events: none; }

.scroll-x { position: absolute; right: 431px; bottom: 2px; width: 453px; height: 6px; border-radius: 3px; background: #cfcfd6; }
.scroll-y { position: absolute; right: 2px; top: 308px; width: 6px; height: 323px; border-radius: 3px; background: #d2d3db; }
.statusbar {
  grid-column: 1 / -1;
  display: flex;
  align-items: center;
  gap: 16px;
  padding: 0 24px 1px 22px;
  border-top: 1px solid #e6e6e8;
  color: #8095a0;
}
.news { position: relative; }
.news::after { content: ""; position: absolute; right: -10px; top: 2px; width: 8px; height: 8px; border-radius: 50%; background: #f4523f; }
.prefs { margin-left: auto; display: flex; align-items: center; gap: 8px; }

/* library strip */
.library {
  z-index: 2;
  display: flex;
  flex-direction: column;
  align-items: center;
  gap: 20px;
  padding: 12px 0 17px;
  background: #fff;
  box-shadow: -3px 0 12px rgba(60, 70, 90, .12);
  color: #56666f;
}
.library hr { width: 20px; height: 1px; margin: -5px 0; border: 0; background: #c3c8cc; }
.trash { margin-top: auto; }

/* property panel */
.props { z-index: 3; display: flex; flex-direction: column; background: #fff; border-left: 1px solid #dcdee6; }
.align-row { display: flex; justify-content: space-between; align-items: center; height: 32px; padding: 0 6px; border-bottom: 1px solid #dfe1e5; }
.props section { border-bottom: 1px solid #d5d9dc; padding: 6px 10px 11px; }
.props h2 { margin: 0; font-size: 12px; line-height: 18px; font-weight: 400; }
.props .size { padding: 12px 10px; }
.orient { display: flex; height: 24px; padding: 2px; background: #f1f1f1; border-radius: 2px; }
.orient button { flex: 1; display: flex; justify-content: center; align-items: center; gap: 8px; color: #7b8494; }
.orient .on { background: #fff; color: #1f8cff; }
.dims { display: grid; grid-template-columns: 1fr 1fr; gap: 10px; margin-top: 12px; }
.num { display: flex; align-items: center; gap: 6px; height: 22px; padding: 0 6px; border: 1px solid #e6e7e9; border-radius: 2px; background: #f1f1f1; color: #7b8890; }
.num input { width: 100%; min-width: 0; padding: 0; border: 0; background: none; color: #3f4a52; }
.num.off { background: #f7f7f7; border-color: #f0f0f0; color: #dfe1e3; }
.num.off input { color: #c8cdd0; }
.num-box { width: 36px; height: 22px; padding: 0 6px 1px; border: 1px solid #e6e7e9; border-radius: 2px; background: #f1f1f1; color: #3f4a52; }
.num-box:disabled { background: #f7f7f7; border-color: #f0f0f0; color: #c8cdd0; }
.num-box.wide { width: 46px; }
.bg-row { display: flex; align-items: center; justify-content: space-between; margin-top: 17px; }
.swatch { width: 46px; height: 22px; padding: 2px; border: 1px solid #f1f1f1; border-radius: 2px; background: #f7f7f7; }
.swatch i { display: block; height: 16px; border: 1px solid #d5d9dc; background: #fff; }
.bg-row input[type="range"] { appearance: none; width: 70px; height: 12px; background: linear-gradient(#ff5f5f, #ff5f5f) 0 5px / 60px 3px no-repeat; }
.bg-row input[type="range"]::-webkit-slider-thumb { appearance: none; width: 12px; height: 12px; border: 1px solid #c3c8cc; border-radius: 50%; background: #fff; }
.layout-grid { display: grid; grid-template-columns: 26px 24px repeat(3, 36px); gap: 12px 8px; align-items: center; margin-top: 18px; }
.mesh .layout-grid { margin-top: 17px; }
.layout-grid input[type="checkbox"] { appearance: none; width: 12px; height: 12px; margin-top: 2px; border: 1px solid #8b9ba6; border-radius: 1px; background: #f6f9fb; }
.layout-grid input[type="checkbox"]:checked::before { content: ""; display: block; width: 8px; height: 4px; margin: 2px 0 0 1px; border: solid #ff5a5a; border-width: 0 0 2px 2px; transform: rotate(-48deg); }
.captions { display: flex; justify-content: flex-end; gap: 8px; margin-top: 2px; color: #8095a0; }
.captions span { width: 36px; text-align: center; }
.links { display: flex; justify-content: space-between; align-items: center; height: 32px; padding: 0 11px 0 10px; }
.export { margin-top: auto; padding: 6px 10px; height: 34px; background: #f3f3f4; border-top: 1px solid #e6e8ec; }
.export button { width: 100%; height: 22px; background: #fff; border-radius: 2px; box-shadow: 0 1px 3px rgba(0, 0, 0, .16); color: #7b8494; }
```
